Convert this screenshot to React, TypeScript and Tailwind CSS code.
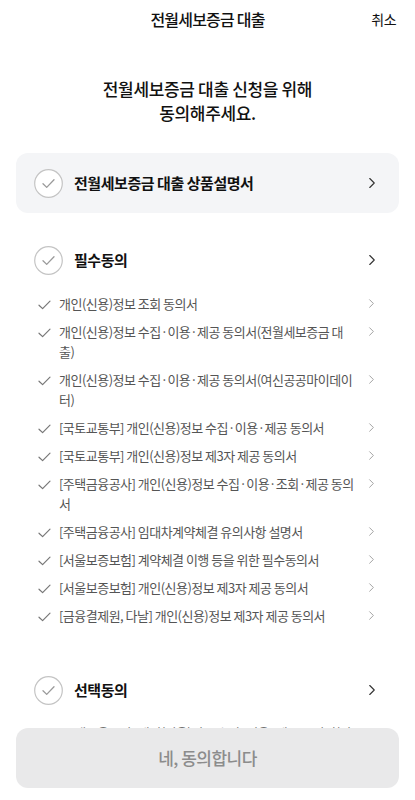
import { ChevronRight } from 'lucide-react';

const required = [
  '개인(신용)정보 조회 동의서',
  '개인(신용)정보 수집·이용·제공 동의서(전월세보증금 대출)',
  '개인(신용)정보 수집·이용·제공 동의서(여신공공마이데이터)',
  '[국토교통부] 개인(신용)정보 수집·이용·제공 동의서',
  '[국토교통부] 개인(신용)정보 제3자 제공 동의서',
  '[주택금융공사] 개인(신용)정보 수집·이용·조회·제공 동의서',
  '[주택금융공사] 임대차계약체결 유의사항 설명서',
  '[서울보증보험] 계약체결 이행 등을 위한 필수동의서',
  '[서울보증보험] 개인(신용)정보 제3자 제공 동의서',
  '[금융결제원, 다날] 개인(신용)정보 제3자 제공 동의서',
];

const optional = [
  '[주택금융공사] 개인(신용)정보 수집·이용·제공 동의서(선택)',
  '[서울보증보험] 개인(신용)정보 수집·이용·제공 동의서(선택)',
];

function CircleCheck() {
  return (
    <svg width="29" height="29" viewBox="0 0 29 29" className="shrink-0">
      <circle cx="14.5" cy="14.5" r="13.8" fill="white" stroke="#c4c4c4" strokeWidth="1.2" />
      <path d="M9 14.8l3.7 3.6 7.3-7.6" fill="none" stroke="#9a9a9a" strokeWidth="1.3" strokeLinecap="round" strokeLinejoin="round" />
    </svg>
  );
}

function SmallCheck() {
  return (
    <svg width="13" height="10" viewBox="0 0 13 10" className="mt-[6px] shrink-0">
      <path d="M1 5.2l3.6 3.4L12 1.2" fill="none" stroke="#777" strokeWidth="1.2" strokeLinecap="round" strokeLinejoin="round" />
    </svg>
  );
}

function SectionRow({ label }: { label: string }) {
  return (
    <div className="flex h-[48px] items-center px-[34px]">
      <CircleCheck />
      <span className="ml-[11px] flex-1 text-[15px] font-bold tracking-[-0.03em] text-[#111]">{label}</span>
      <ChevronRight size={18} strokeWidth={1.5} className="text-[#333]" />
    </div>
  );
}

function Item({ text }: { text: string }) {
  return (
    <li className="flex items-start pl-[38px] pr-[36px]">
      <SmallCheck />
      <span className="ml-[8px] flex-1 pr-[8px] text-[13px] leading-[20px] tracking-[-0.04em] text-[#555]">{text}</span>
      <ChevronRight size={15} strokeWidth={1.3} className="mt-[2px] shrink-0 text-[#8f8f8f]" />
    </li>
  );
}

export default function App() {
  return (
    <div className="min-h-screen bg-white pb-[100px] font-['Noto_Sans_CJK_KR','Noto_Sans',sans-serif]">
      <header className="grid h-[38px] grid-cols-[1fr_auto_1fr] items-center px-[19px]">
        <span />
        <h1 className="text-[16px] font-medium tracking-[-0.05em] text-[#111]">전월세보증금 대출</h1>
        <button className="justify-self-end text-[14px] tracking-[-0.04em] text-[#111]">취소</button>
      </header>

      <h2 className="mt-[39px] text-center text-[17px] font-medium leading-[24px] tracking-[-0.02em] text-[#111]">
        전월세보증금 대출 신청을 위해
        <br />
        동의해주세요.
      </h2>

      <div className="mx-4 mt-[28px] flex h-[60px] items-center rounded-xl bg-[#f4f5f7] px-[18px]">
        <CircleCheck />
        <span className="ml-[11px] flex-1 text-[15px] font-bold tracking-[-0.03em] text-[#111]">전월세보증금 대출 상품설명서</span>
        <ChevronRight size={18} strokeWidth={1.5} className="text-[#333]" />
      </div>

      <div className="mt-[23px]">
        <SectionRow label="필수동의" />
        <ul className="mt-[10px] flex flex-col gap-[8px]">
          {required.map((t) => (
            <Item key={t} text={t} />
          ))}
        </ul>
      </div>

      <div className="mt-[40px]">
        <SectionRow label="선택동의" />
        <ul className="mt-[9px] flex flex-col gap-[8px]">
          {optional.map((t) => (
            <Item key={t} text={t} />
          ))}
        </ul>
      </div>

      <div className="fixed inset-x-0 bottom-0 bg-white px-4 pb-[12px]">
        <button className="flex h-[60px] w-full items-center justify-center rounded-xl bg-[#e9e9ea] text-[17px] font-medium tracking-[-0.03em] text-[#8c8c8c]">
          네, 동의합니다
        </button>
      </div>
    </div>
  );
}
